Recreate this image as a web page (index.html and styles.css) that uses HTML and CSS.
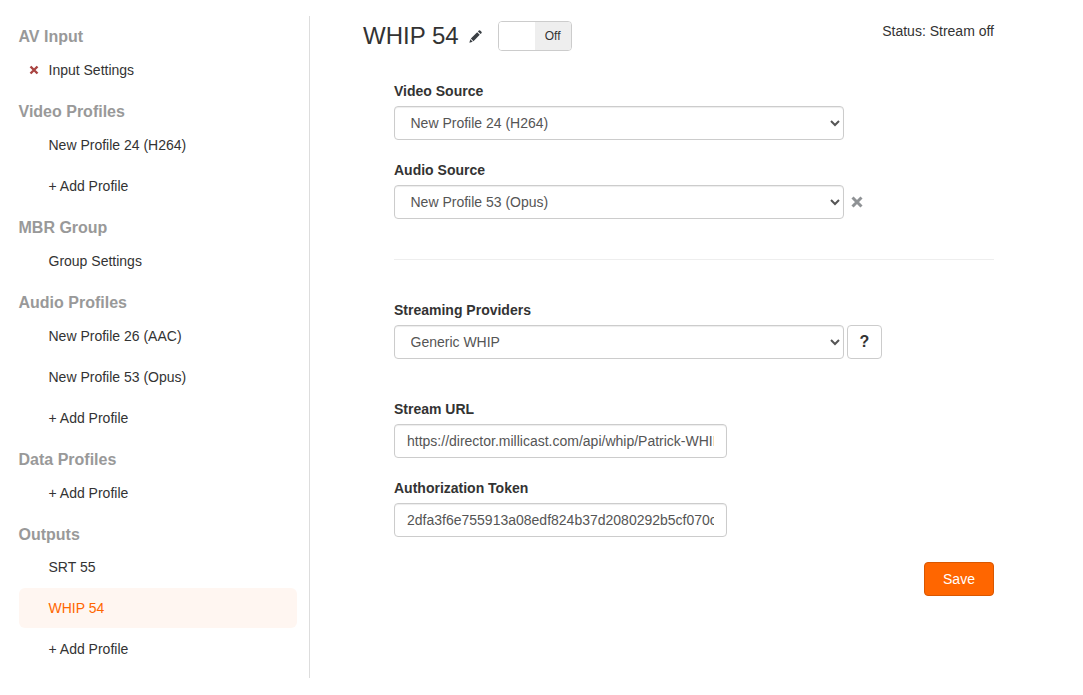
FILE: index.html
```html
<!DOCTYPE html>
<html lang="en">
<head>
<meta charset="utf-8">
<title>WHIP 54</title>
<link rel="stylesheet" href="styles.css">
</head>
<body>
<div class="page">
  <nav class="sidebar">
    <h4 class="group">AV Input</h4>
    <a class="item">
      <svg class="err" viewBox="0 0 10 10" width="10" height="10"><path d="M1.5 1.5L8.5 8.5M8.5 1.5L1.5 8.5" stroke="#a94442" stroke-width="2.4" fill="none"/></svg>
      Input Settings</a>
    <h4 class="group">Video Profiles</h4>
    <a class="item">New Profile 24 (H264)</a>
    <a class="item">+ Add Profile</a>
    <h4 class="group">MBR Group</h4>
    <a class="item">Group Settings</a>
    <h4 class="group">Audio Profiles</h4>
    <a class="item">New Profile 26 (AAC)</a>
    <a class="item">New Profile 53 (Opus)</a>
    <a class="item">+ Add Profile</a>
    <h4 class="group">Data Profiles</h4>
    <a class="item">+ Add Profile</a>
    <h4 class="group">Outputs</h4>
    <a class="item tight">SRT 55</a>
    <a class="item active">WHIP 54</a>
    <a class="item">+ Add Profile</a>
  </nav>
  <main class="content">
    <header class="head">
      <h2 class="title">WHIP 54</h2>
      <svg class="pencil" viewBox="0 0 14 14" width="13" height="13"><path d="M9.6 1.6l2.8 2.8 1-1a1 1 0 0 0 0-1.4l-1.4-1.4a1 1 0 0 0-1.4 0zM8.8 2.4L2 9.2l2.8 2.8 6.8-6.8zM1.4 10L.4 13.6 4 12.6z" fill="#3a3f44"/></svg>
      <div class="toggle"><span class="knob"></span><span class="off">Off</span></div>
      <div class="status">Status: Stream off</div>
    </header>
    <section class="form">
      <label class="lbl">Video Source</label>
      <select class="ctl sel"><option>New Profile 24 (H264)</option></select>
      <label class="lbl lbl2">Audio Source</label>
      <div class="row">
        <select class="ctl sel"><option>New Profile 53 (Opus)</option></select>
        <svg class="clear" viewBox="0 0 12 12" width="12" height="12"><path d="M1.5 1.5L10.5 10.5M10.5 1.5L1.5 10.5" stroke="#8f9295" stroke-width="3" fill="none"/></svg>
      </div>
      <hr class="rule">
      <div class="providers">
        <label class="lbl">Streaming Providers</label>
        <div class="row">
          <select class="ctl sel"><option>Generic WHIP</option></select>
          <button class="help">?</button>
        </div>
      </div>
      <label class="lbl lbl3">Stream URL</label>
      <input class="ctl txt" value="https://director.millicast.com/api/whip/Patrick-WHIP-Test">
      <label class="lbl lbl2">Authorization Token</label>
      <input class="ctl txt" value="2dfa3f6e755913a08edf824b37d2080292b5cf070c4e1d9a">
      <div class="actions"><button class="save">Save</button></div>
    </section>
  </main>
</div>
</body>
</html>
```
FILE: styles.css
```css
* { box-sizing: border-box; }
html, body { margin: 0; padding: 0; background: #fff; }
body { font-family: "Liberation Sans", Arial, sans-serif; font-size: 14px; color: #333; height: 695px; overflow: hidden; }
.page { display: flex; align-items: flex-start; padding-top: 16px; }
.sidebar { width: 310px; height: 662px; border-right: 1px solid #ddd; padding: 7px 12px 0 18.5px; flex: none; }
.group { margin: 7px 0 0; height: 27px; line-height: 27px; font-size: 16px; font-weight: 700; color: #999; }
.group:first-child { margin-top: 0; }
.item { display: flex; align-items: center; height: 41px; padding: 0 0 2px 30px; position: relative; color: #333; border-radius: 6px; }
.err { position: absolute; left: 10px; top: 15px; }
.tight { height: 40px; }
.active { color: #f60; background: #fff6f1; height: 40px; margin: 0 0 1px; padding-bottom: 0; }
.content { width: 684px; padding-left: 53px; position: relative; }
.head { display: flex; align-items: center; height: 40px; }
.title { margin: 0; font-size: 24px; font-weight: 400; color: #333; line-height: 40px; }
.pencil { margin: 1px 0 0 10px; }
.toggle { display: flex; width: 74px; height: 30px; margin-left: 16px; border: 1px solid #ccc; border-radius: 4px; overflow: hidden; }
.knob { width: 36px; background: #fff; }
.off { flex: 1; background: #eee; font-size: 12px; line-height: 28px; text-align: center; }
.status { margin-left: auto; align-self: flex-start; margin-top: 7px; line-height: 16px; }
.form { padding: 25px 0 0 31px; }
.lbl { display: block; font-weight: 700; height: 20px; line-height: 20px; margin-bottom: 5px; }
.lbl2 { margin-top: 20px; }
.lbl3 { margin-top: 40px; }
.ctl { display: block; height: 34px; border: 1px solid #ccc; border-radius: 4px; background: #fff; color: #555; font: 14px "Liberation Sans", Arial, sans-serif; box-shadow: inset 0 1px 1px rgba(0,0,0,.075); }
.sel { width: 450px; padding: 6px 11.5px; }
.txt { width: 333px; padding: 6px 12px; }
.row { display: flex; align-items: center; }
.clear { margin-left: 7px; }
.rule { border: 0; border-top: 1px solid #eee; margin: 40px 0 40px; width: 600px; }
.help { width: 35px; height: 34px; margin-left: 3px; padding: 0; border: 1px solid #ccc; border-radius: 4px; background: #fff; font: 700 16px "Liberation Sans", Arial, sans-serif; color: #333; }
.actions { width: 600px; display: flex; justify-content: flex-end; margin-top: 25px; }
.save { width: 70px; height: 34px; padding: 0; border: 1px solid #d95700; border-radius: 4px; background: #f60; color: #fff; font: 14px "Liberation Sans", Arial, sans-serif; }
```
